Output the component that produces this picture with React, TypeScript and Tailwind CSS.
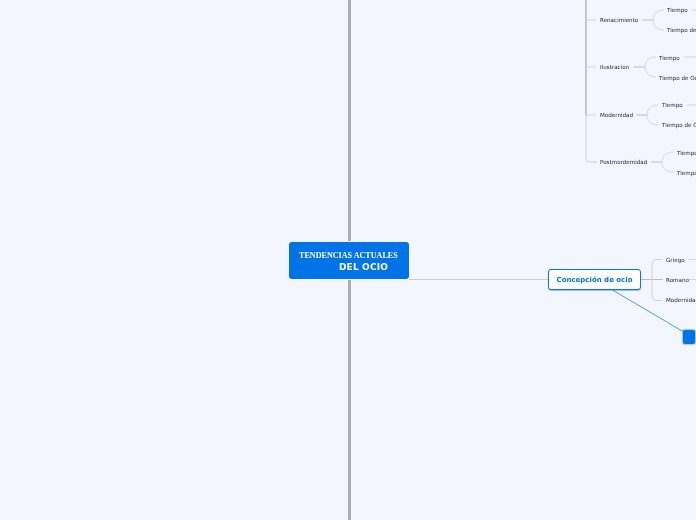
import React from 'react';

type LabelProps = { x: number; y: number; text: string };

const topics: LabelProps[] = [
  { x: 600, y: 20, text: 'Renacimiento' },
  { x: 600, y: 67, text: 'Ilustracion' },
  { x: 600, y: 115, text: 'Modernidad' },
  { x: 600, y: 162, text: 'Postmordemidad' },
  { x: 667, y: 10, text: 'Tiempo' },
  { x: 667, y: 30, text: 'Tiempo de Ocio' },
  { x: 659, y: 58, text: 'Tiempo' },
  { x: 659, y: 78, text: 'Tiempo de Ocio' },
  { x: 662, y: 105, text: 'Tiempo' },
  { x: 662, y: 125, text: 'Tiempo de Ocio' },
  { x: 677, y: 153, text: 'Tiempo' },
  { x: 677, y: 173, text: 'Tiempo de Ocio' },
  { x: 666, y: 260, text: 'Griego' },
  { x: 666, y: 280, text: 'Romano' },
  { x: 666, y: 300, text: 'Modernidad' },
];

const branches = [
  { from: 642, mid: 653, y: 20, out: 692 },
  { from: 634, mid: 645, y: 67, out: 684 },
  { from: 636, mid: 647, y: 115, out: 687 },
  { from: 651, mid: 662, y: 162, out: 700 },
];

const Label = ({ x, y, text }: LabelProps) => (
  <span
    className="absolute -translate-y-1/2 will-change-transform whitespace-nowrap text-[5.6px] leading-[8px] text-[#26262e] font-['DejaVu_Sans',sans-serif]"
    style={{ left: x, top: y }}
  >
    {text}
  </span>
);

export default function App() {
  return (
    <div className="relative w-[696px] h-[520px] overflow-hidden bg-[#f3f6ff]">
      <svg className="absolute inset-0" width="696" height="520" fill="none">
        {/* central trunk */}
        <path d="M349.5 0V241M349.5 280V520" stroke="#adadb0" strokeWidth="3" />
        <path d="M409 279.5H548" stroke="#c9ccd6" strokeWidth="1" />

        {/* historia branch */}
        <path d="M586 0V115" stroke="#c4c6ce" strokeWidth="2" />
        <path d="M586 115V158Q586 162 590 162H597" stroke="#d9dbe3" strokeWidth="1.5" />
        <path d="M586 20H596M586 67H596M586 115H596" stroke="#d5d7df" strokeWidth="1" />

        {branches.map((b) => (
          <g key={b.y}>
            <path d={`M${b.from} ${b.y}H${b.mid}`} stroke="#c4c6ce" strokeWidth="1.2" />
            <path
              d={`M${b.mid + 11} ${b.y - 10}C${b.mid + 4} ${b.y - 10} ${b.mid} ${b.y - 6} ${b.mid} ${b.y}C${b.mid} ${b.y + 6} ${b.mid + 4} ${b.y + 10} ${b.mid + 11} ${b.y + 10}`}
              stroke="#d5d7df"
              strokeWidth="1"
            />
            <path d={`M${b.out} ${b.y - 10}H696`} stroke="#d5d7df" strokeWidth="1" />
          </g>
        ))}

        {/* concepcion branch */}
        <path d="M641 279.5H663" stroke="#b8bac2" strokeWidth="1" />
        <path
          d="M662 259.5H657Q652 259.5 652 264.5V295.5Q652 300.5 657 300.5H662"
          stroke="#d0d2da"
          strokeWidth="1"
        />
        <path d="M688 259.5H696M688 279.5H696" stroke="#d5d7df" strokeWidth="1" />
        <path d="M612.5 290L683 331.5" stroke="#4b9cf0" strokeWidth="1" />
      </svg>

      <div className="absolute left-[289px] top-[242px] w-[120px] h-[37px] pt-[3px] rounded-[3px] bg-[#0073e6] flex flex-col items-start justify-center text-white will-change-transform">
        <span className="ml-[10px] whitespace-nowrap text-[8.1px] leading-[11px] font-bold font-['Liberation_Serif',serif]">
          TENDENCIAS ACTUALES
        </span>
        <span className="ml-[50px] whitespace-nowrap text-[9px] leading-[13px] font-bold tracking-[0.15px] font-['DejaVu_Sans',sans-serif]">
          DEL OCIO
        </span>
      </div>

      <div className="absolute left-[548px] top-[269px] w-[93px] h-[21px] pt-[1px] rounded-[3px] border-[1.5px] border-[#0b74de] bg-white shadow-[0_1px_1px_rgba(0,80,180,0.35)] flex items-center justify-center will-change-transform">
        <span className="whitespace-nowrap text-[7px] font-bold text-[#0073e6] font-['DejaVu_Sans',sans-serif]">
          Concepción de ocio
        </span>
      </div>

      <div className="absolute left-[683px] top-[330px] w-[12px] h-[14px] rounded-[2px] bg-[#0073e6] shadow-[0_0_1px_1px_rgba(0,115,230,0.35)]" />

      {topics.map((t) => (
        <Label key={`${t.x}-${t.y}`} {...t} />
      ))}
    </div>
  );
}
